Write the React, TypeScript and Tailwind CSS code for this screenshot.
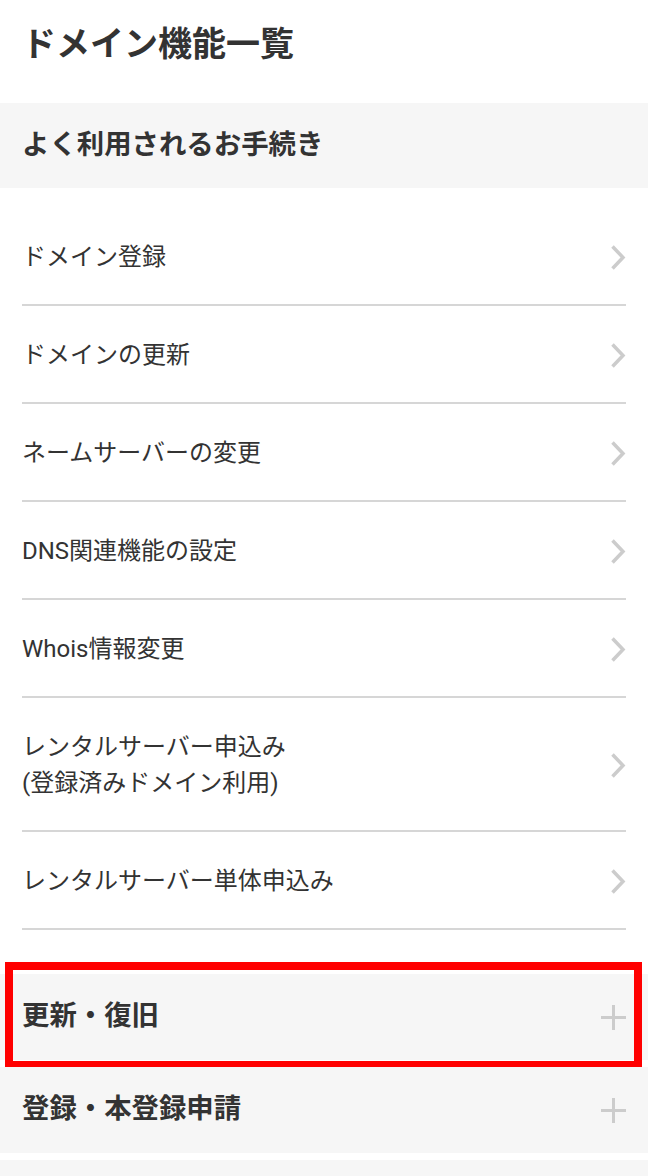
import type { ReactNode } from "react";

const links: ReactNode[] = [
  "ドメイン登録",
  "ドメインの更新",
  "ネームサーバーの変更",
  "DNS関連機能の設定",
  "Whois情報変更",
  <>
    レンタルサーバー申込み
    <br />
    (登録済みドメイン利用)
  </>,
  "レンタルサーバー単体申込み",
];

const sections = ["更新・復旧", "登録・本登録申請", ""];

function Chevron() {
  return (
    <svg width="16" height="27" viewBox="0 0 16 27" className="shrink-0">
      <path d="M2.5 2.5 L13 13.5 L2.5 24.5" fill="none" stroke="#cccccc" strokeWidth="3.5" />
    </svg>
  );
}

function Plus() {
  return (
    <svg width="25" height="25" viewBox="0 0 25 25" className="shrink-0">
      <path d="M12.5 0 V25 M0 12.5 H25" fill="none" stroke="#cccccc" strokeWidth="3" />
    </svg>
  );
}

export default function App() {
  return (
    <div
      className="w-[648px] h-[1176px] overflow-hidden bg-white text-[#333333]"
      style={{ fontFamily: 'Roboto, "Noto Sans CJK JP", sans-serif' }}
    >
      <div className="px-[22px] pt-[22px] pb-[37px]">
        <h1 className="text-[34px] leading-[44px] font-bold">ドメイン機能一覧</h1>
      </div>

      <div className="h-[85px] bg-[#f6f6f6] px-[22px] flex items-center">
        <h2 className="text-[27.4px] font-bold">よく利用されるお手続き</h2>
      </div>

      <ul className="mx-[22px] pt-[20px]">
        {links.map((label, i) => (
          <li
            key={i}
            className="flex items-center justify-between border-b-2 border-[#d6d6d6] pt-[31px] pb-[29px]"
          >
            <span className="text-[24px] leading-[36px]">{label}</span>
            <Chevron />
          </li>
        ))}
      </ul>

      <div className="mt-[44px] flex flex-col gap-[7px]">
        {sections.map((title, i) => (
          <div
            key={i}
            className="relative h-[86px] bg-[#f6f6f6] px-[22px] flex items-center justify-between"
          >
            <span className="text-[27.4px] font-bold">{title}</span>
            {title && <Plus />}
            {i === 0 && (
              <div className="absolute left-[5px] right-[6px] top-[-12px] bottom-[-9px] border-8 border-[#ff0000]" />
            )}
          </div>
        ))}
      </div>
    </div>
  );
}
